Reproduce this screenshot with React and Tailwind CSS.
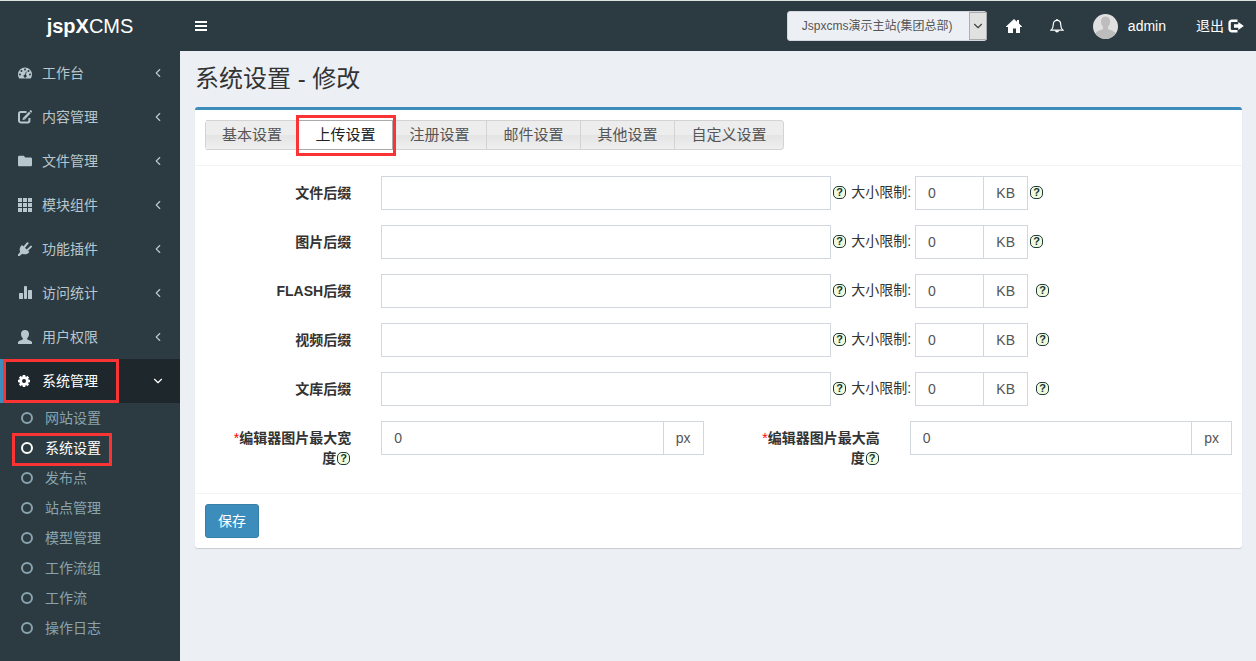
import { useState } from "react";
import { FaFolder } from "react-icons/fa";
import { ChevronDown, ChevronLeft } from "lucide-react";

const DashboardIcon = () => (
  <svg viewBox="0 0 14 14" className="w-[14px] h-[14px]" fill="currentColor">
    <path
      fillRule="evenodd"
      d="M7 1.500a7 7 0 0 0-7 7c0 1.400.4 2.700 1.100 3.700.1.200.3.300.5.300h10.800c.2 0 .4-.1.500-.3.700-1 1.100-2.300 1.100-3.700a7 7 0 0 0-7-7zM7 2.600a1 1 0 1 1 0 2 1 1 0 0 1 0-2zM3.500 4.100a1 1 0 1 1 0 2 1 1 0 0 1 0-2zM10.500 4.100a1 1 0 1 1 0 2 1 1 0 0 1 0-2zM2 7.600a1 1 0 1 1 0 2 1 1 0 0 1 0-2zM12 7.600a1 1 0 1 1 0 2 1 1 0 0 1 0-2zM7.900 5.600l.8.2-.8 3a1.500 1.500 0 1 1-.8-.2z"
    />
  </svg>
);

const EditIcon = () => (
  <svg viewBox="0 0 14 14" className="w-[14px] h-[14px]" fill="none" stroke="currentColor">
    <path d="M8.500 2H2.700A1.700 1.700 0 0 0 1 3.700v7A1.700 1.700 0 0 0 2.700 12.400h7a1.700 1.700 0 0 0 1.700-1.700V8" strokeWidth="2" />
    <path d="M6.200 8.300l5.600-5.800" strokeWidth="2.400" />
    <path d="M12.300 2l1.200-1.300" strokeWidth="2.400" />
    <path d="M4.500 9.900l.5-2.600 2.200 2.100z" fill="currentColor" stroke="none" />
  </svg>
);

const GridIcon = () => (
  <svg viewBox="0 0 14 14" className="w-[14px] h-[14px]" fill="currentColor">
    {[0, 5, 10].map((y) =>
      [0, 5, 10].map((x) => <rect key={x + "-" + y} x={x} y={y} width="4" height="4" />)
    )}
  </svg>
);

const PlugIcon = () => (
  <svg viewBox="0 0 14 14" className="w-[14px] h-[14px]" fill="currentColor">
    <path d="M4 2.900l7.400 7c-1.600 2.400-4.700 3-7.100 1.900L1.500 14 0 14v-1.500l2.200-2.600C1.100 7.500 1.700 4.700 4 2.900z" />
    <path d="M6 5.500L9.600 1.200M8.900 8.600L13 4.600" stroke="currentColor" strokeWidth="2" strokeLinecap="round" />
  </svg>
);

const StatsIcon = () => (
  <svg viewBox="0 0 14 14" className="w-[14px] h-[14px]" fill="currentColor">
    <rect x="1" y="7" width="4" height="6" rx="0.500" />
    <rect x="6" y="0" width="3" height="13" rx="1" />
    <rect x="10" y="4" width="4" height="9" rx="0.500" />
  </svg>
);

const UserIcon = () => (
  <svg viewBox="0 0 14 14" className="w-[14px] h-[14px]" fill="currentColor">
    <path d="M7 0c2.500 0 4 1.500 4 3.900 0 1.900-.8 3.300-1.800 4.200v1.200c.1.700 4.800 1.400 4.800 3.200V14H0v-1.500c0-1.800 4.700-2.500 4.800-3.200V8.100C3.800 7.200 3 5.800 3 3.900 3 1.500 4.500 0 7 0z" />
  </svg>
);

const GearIcon = () => (
  <svg viewBox="0 0 14 14" className="w-[14px] h-[14px]" fill="none" stroke="currentColor">
    <circle cx="6" cy="7" r="3.400" strokeWidth="2.800" />
    {[0, 45, 90, 135].map((deg) => (
      <g key={deg} transform={"rotate(" + deg + " 6 7)"}>
        <path d="M6 1v2M6 11v2" strokeWidth="2.600" />
      </g>
    ))}
  </svg>
);

const HomeIcon = () => (
  <svg viewBox="0 0 16 14" className="w-4 h-[14px]" fill="currentColor">
    <path d="M8 0l3 2.700V1h2v3.500l3 2.900V8h-2v6h-4V9.500H7V14H2V8H0v-.6z" />
  </svg>
);

const BellIcon = () => (
  <svg viewBox="0 0 14 14" className="w-[14px] h-[14px]" fill="none" stroke="currentColor">
    <path d="M7 1.400c-2.500 0-3.700 1.800-3.700 4 0 3-.8 4.500-2.300 5.700h12c-1.500-1.200-2.300-2.700-2.300-5.700 0-2.200-1.200-4-3.700-4z" strokeWidth="1.200" />
    <path d="M7 0v1.500" strokeWidth="1.500" />
    <path d="M5 11.500h4a2 2 0 0 1-4 0z" fill="currentColor" stroke="none" />
  </svg>
);

const LogoutIcon = () => (
  <svg viewBox="0 0 16 14" className="w-4 h-[14px]" fill="none">
    <path d="M9.500 1.700H3.800a2.200 2.200 0 0 0-2.200 2.200v6.200a2.200 2.200 0 0 0 2.200 2.200h5.700" stroke="currentColor" strokeWidth="2.400" />
    <path d="M6 5.300h4.300V3L15.800 7l-5.500 4V8.700H6z" fill="currentColor" />
  </svg>
);

const Avatar = () => (
  <svg viewBox="0 0 25 25" className="w-[25px] h-[25px] rounded-full">
    <rect width="25" height="25" fill="#e0e0e0" />
    <path
      d="M12.500 2.500c3 0 4.600 2 4.600 5 0 2.200-.8 4.200-2 5.300v2.400c2.600 1 6.400 1.600 8 4.800V25H2v-5c1.600-3.200 5.400-3.800 8-4.800v-2.400c-1.200-1.100-2-3.100-2-5.300 0-3 1.500-5 4.500-5z"
      fill="#bdbdbd"
    />
  </svg>
);

const menus = [
  { name: "工作台", icon: <DashboardIcon /> },
  { name: "内容管理", icon: <EditIcon /> },
  { name: "文件管理", icon: <FaFolder size={14} /> },
  { name: "模块组件", icon: <GridIcon /> },
  { name: "功能插件", icon: <PlugIcon /> },
  { name: "访问统计", icon: <StatsIcon /> },
  { name: "用户权限", icon: <UserIcon /> },
];

const subMenus = ["网站设置", "系统设置", "发布点", "站点管理", "模型管理", "工作流组", "工作流", "操作日志"];

const tabs = [
  { name: "基本设置", width: "w-[93px]" },
  { name: "上传设置", width: "w-[94px]" },
  { name: "注册设置", width: "w-[94px]" },
  { name: "邮件设置", width: "w-[94px]" },
  { name: "其他设置", width: "w-[94px]" },
  { name: "自定义设置", width: "w-[109px] rounded-r-[4px]" },
];

const uploadTypes = [
  { id: "file", label: "文件后缀" },
  { id: "image", label: "图片后缀" },
  { id: "flash", label: "FLASH后缀", spaced: true },
  { id: "video", label: "视频后缀", spaced: true },
  { id: "doc", label: "文库后缀", spaced: true },
];

// red frame around the entry being explained
const Marker = ({ className }) => (
  <span className={"absolute border-3 border-[#fa3434] pointer-events-none z-10 " + className}></span>
);

const Help = () => (
  <span className="inline-flex items-center justify-center w-[13px] h-[13px] flex-shrink-0 rounded-[5px] border border-[#1d3a3c] bg-[#f1fbdc] text-[#14333a] text-[11px] leading-none font-bold">
    ?
  </span>
);

const Circle = () => (
  <span className="w-3 h-3 rounded-full border-2 border-current flex-shrink-0"></span>
);

function Header() {
  return (
    <header className="flex h-[50px] bg-[#2c3b41] text-white">
      <a href="#" className="w-[180px] flex-shrink-0 text-center text-[20px] leading-[50px]">
        <b>jspX</b>CMS
      </a>
      <button aria-label="菜单" className="px-[15px] flex flex-col justify-center gap-[2px]">
        <span className="w-3 h-[2px] bg-white"></span>
        <span className="w-3 h-[2px] bg-white"></span>
        <span className="w-3 h-[2px] bg-white"></span>
      </button>
      <div className="ml-auto flex items-center">
        <div className="relative mr-[5px]">
          <select
            aria-label="站点"
            className="appearance-none w-[200px] h-[30px] rounded-[3px] border border-[#d2d6de] bg-[#ecf0f5] pl-[14px] text-xs text-[#555]"
          >
            <option>Jspxcms演示主站(集团总部)</option>
          </select>
          <span className="absolute right-0 top-px w-[18px] h-7 flex items-center justify-center border border-[#adadad] bg-[#e1e1e1] text-[#444] pointer-events-none">
            <ChevronDown size={14} className="flex-shrink-0" />
          </span>
        </div>
        <a href="#" aria-label="首页" className="px-[14px]">
          <HomeIcon />
        </a>
        <a href="#" aria-label="通知" className="px-[14px]">
          <BellIcon />
        </a>
        <a href="#" className="px-[15px] flex items-center gap-[10px]">
          <Avatar />
          admin
        </a>
        <a href="#" className="pl-[15px] pr-3 flex items-center gap-1">
          退出
          <LogoutIcon />
        </a>
      </div>
    </header>
  );
}

function Sidebar() {
  return (
    <aside className="w-[180px] flex-shrink-0 bg-[#2c3b41] text-[#b8c7ce]">
      <nav>
        {menus.map((m) => (
          <a key={m.name} href="#" className="h-11 pl-[18px] pr-[15px] flex items-center gap-[10px]">
            {m.icon}
            <span className="flex-1">{m.name}</span>
            <ChevronLeft size={14} />
          </a>
        ))}
        <a
          href="#"
          className="relative h-11 pl-[15px] pr-[15px] flex items-center gap-[10px] border-l-3 border-[#3c8dbc] bg-[#1e282c] text-white"
        >
          <Marker className="left-0 top-0 w-[116px] h-11" />
          <GearIcon />
          <span className="flex-1">系统管理</span>
          <ChevronDown size={14} />
        </a>
        <ul>
          {subMenus.map((name) => (
            <li key={name} className="relative">
              {name === "系统设置" && <Marker className="left-3 top-0 w-[100px] h-[33px]" />}
              <a
                href="#"
                className={
                  "h-[30px] pl-[21px] flex items-center gap-3 " +
                  (name === "系统设置" ? "text-white" : "text-[#8aa4af]")
                }
              >
                <Circle />
                {name}
              </a>
            </li>
          ))}
        </ul>
      </nav>
    </aside>
  );
}

function UnitInput({ id, unit, className }) {
  return (
    <div className={"flex h-[34px] border border-[#d2d6de] text-[#555] " + className}>
      <input id={id} defaultValue="0" className="flex-1 min-w-0 px-3 outline-none" />
      <span className="px-3 flex items-center border-l border-[#d2d6de]">{unit}</span>
    </div>
  );
}

function UploadRow({ item }) {
  return (
    <div className="grid grid-cols-12 mb-[15px]">
      <label htmlFor={item.id} className="col-span-2 px-[15px] pt-[7px] text-right font-bold">
        {item.label}
      </label>
      <div className="col-span-10 px-[15px] flex items-center">
        <input
          id={item.id}
          type="text"
          className="w-[450px] h-[34px] px-3 border border-[#d2d6de] text-[#555] outline-none"
        />
        <div className="ml-[2px] mr-1 pb-[2px] flex items-center gap-[5px]">
          <Help />
          <label htmlFor={item.id + "-limit"}>大小限制:</label>
        </div>
        <UnitInput id={item.id + "-limit"} unit="KB" className="w-[113px]" />
        <div className={"pb-[2px] flex " + (item.spaced ? "ml-2" : "ml-[2px]")}>
          <Help />
        </div>
      </div>
    </div>
  );
}

function SizeField({ id, text }) {
  return (
    <>
      <label htmlFor={id} className="col-span-2 px-[15px] pt-[7px] text-right font-bold">
        <span className="font-normal text-[#f00]">*</span>
        {text}
        <br />
        <span className="inline-flex items-center gap-px pr-px">
          度<Help />
        </span>
      </label>
      <div className="col-span-4 px-[15px]">
        <UnitInput id={id} unit="px" className="w-full" />
      </div>
    </>
  );
}

export default function App() {
  const [activeTab, setActiveTab] = useState("上传设置");

  return (
    <div className="min-h-screen flex flex-col border-t border-[#dde4e0] bg-[#ecf0f5] font-['Liberation_Sans','Noto_Sans_CJK_SC',sans-serif] text-sm leading-5 text-[#333]">
      <Header />
      <div className="flex-1 flex">
        <Sidebar />
        <main className="flex-1 min-w-0 pl-[15px] pr-[14px] py-[15px]">
          <h1 className="text-2xl leading-[26px] mb-[15px]">系统设置 - 修改</h1>

          <form
            onSubmit={(e) => e.preventDefault()}
            className="rounded-[3px] border-t-3 border-[#3c8dbc] bg-white shadow-[0_1px_1px_rgba(0,0,0,0.15)]"
          >
            <div className="px-[10px] pt-[10px] pb-[15px] flex border-b border-[#f4f4f4]">
              <div className="flex h-[30px] rounded-[4px] border-l border-[#d3d3d3]">
                {tabs.map((tab) => (
                  <div key={tab.name} className="relative">
                    <button
                      type="button"
                      onClick={() => setActiveTab(tab.name)}
                      className={
                        "h-[30px] border-y border-r text-[15px] leading-7 " +
                        tab.width +
                        (tab.name === activeTab
                          ? " border-[#aaa] bg-white text-[#212121]"
                          : " border-[#d3d3d3] bg-[linear-gradient(#ededed_50%,#e4e4e4_50%,#efefef)] text-[#555]")
                      }
                    >
                      {tab.name}
                    </button>
                    {tab.name === "上传设置" && (
                      <Marker className="-left-[3px] -top-[5px] w-[100px] h-[41px]" />
                    )}
                  </div>
                ))}
              </div>
            </div>

            <div className="p-[10px]">
              <div className="-mx-[15px]">
                {uploadTypes.map((item) => (
                  <UploadRow key={item.id} item={item} />
                ))}
                <div className="grid grid-cols-12 mb-[15px]">
                  <SizeField id="maxWidth" text="编辑器图片最大宽" />
                  <SizeField id="maxHeight" text="编辑器图片最大高" />
                </div>
              </div>
            </div>

            <div className="p-[10px] border-t border-[#f4f4f4]">
              <button
                type="submit"
                className="block h-[34px] px-3 rounded-[3px] border border-[#367fa9] bg-[#3c8dbc] text-white"
              >
                保存
              </button>
            </div>
          </form>
        </main>
      </div>
    </div>
  );
}
